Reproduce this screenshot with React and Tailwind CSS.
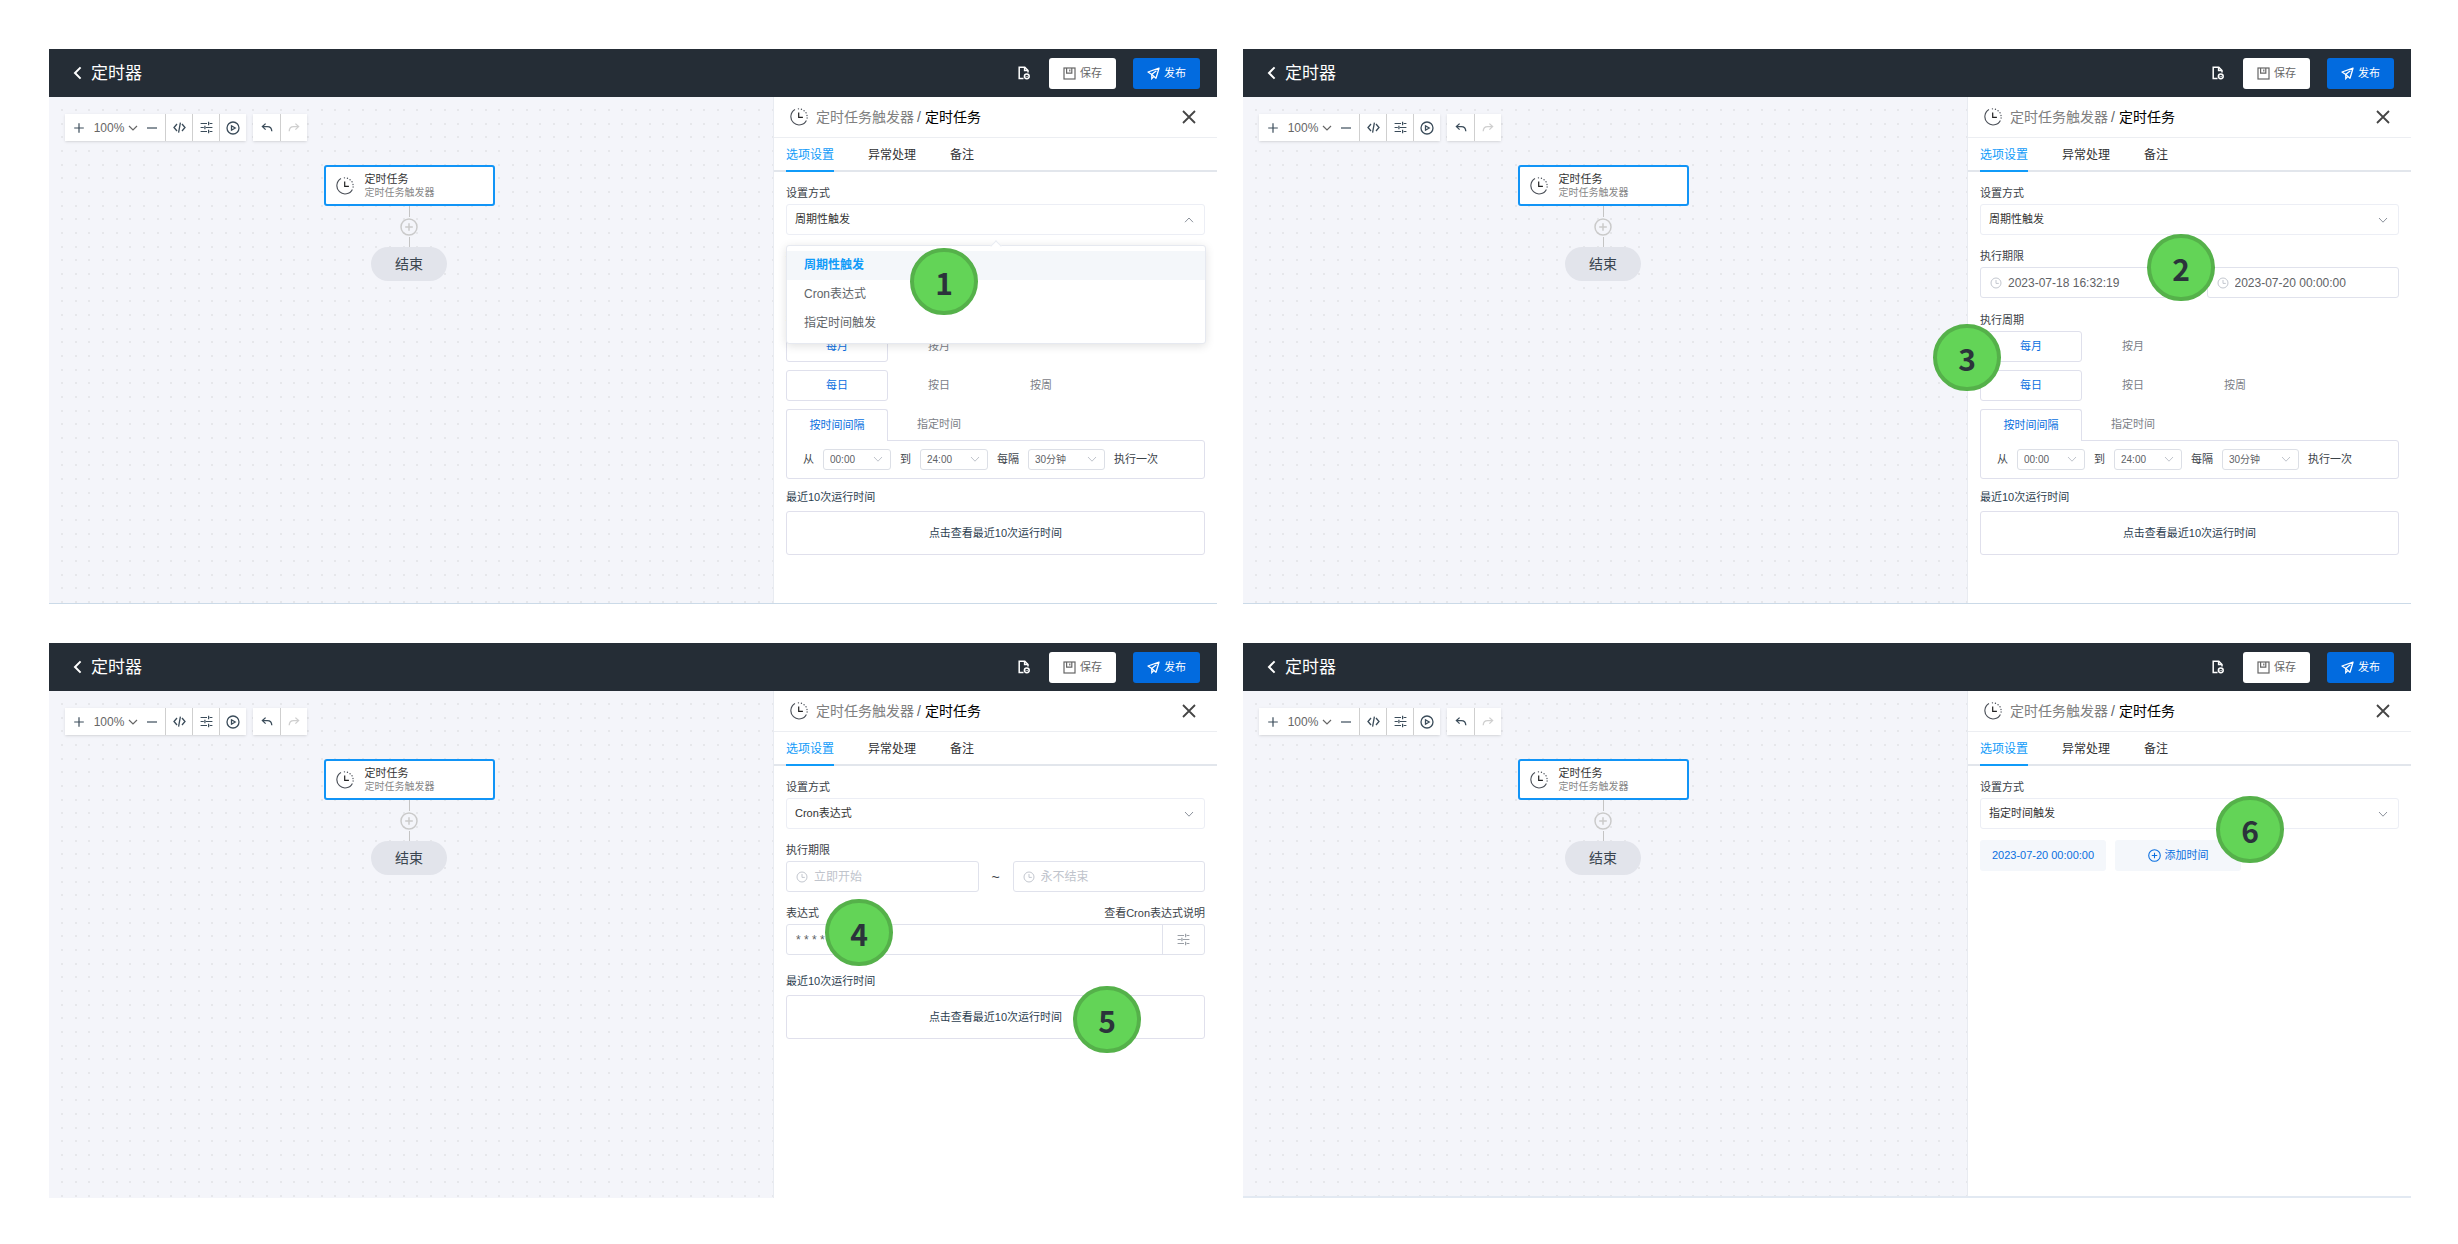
import React, { useId } from 'react';

const CYCLE = '周期性触发';
const CRON = 'Cron表达式';
const FIXED = '指定时间触发';
const MODES = [CYCLE, CRON, FIXED];

function Icon({ size = 'size-4', box = 16, stroke = 1.3, className = '', children }) {
  return (
    <svg
      viewBox={`0 0 ${box} ${box}`}
      className={`${size} shrink-0 ${className}`}
      fill="none"
      stroke="currentColor"
      strokeWidth={stroke}
      aria-hidden="true"
    >
      {children}
    </svg>
  );
}

const TimerIcon = () => (
  <Icon size="size-[18px]" box={18} stroke={1.1} className="text-[#4a4f57]">
    <path d="M5 1.6A8.2 8.2 0 1 0 16.4 12.4" />
    <path d="M8.4 .8h.1M11.4 1.2l.1 .1M14 2.6l.1 .1M16 4.8l.1 .1M17 7.4v.1M17.1 9.9v.1" strokeWidth="1.3" strokeLinecap="round" />
    <path d="M8.7 4.6v4.8h4.2" stroke="#222" strokeWidth="1.2" />
  </Icon>
);

const ClockIcon = () => (
  <Icon size="size-3" box={12} stroke={1} className="text-[#c3c7cf]">
    <circle cx="6" cy="6" r="5" />
    <path d="M6 3v3.4h2.8" />
  </Icon>
);

const SlidersIcon = () => (
  <Icon size="size-[13px]" box={13} stroke={1.2}>
    <path d="M.6 2.5h6.4M9.6 2.5h2.8M.6 6.5h3.2M5.6 6.5h6.8M.6 10.5h6.4M9.6 10.5h2.8" />
    <path d="M8.6 .8v3.4M4.9 4.8v3.4M8.6 8.8v3.4" />
  </Icon>
);

const Chevron = ({ up, className }) => (
  <Icon size="size-[10px]" box={10} stroke={1} className={className}>
    <path d={up ? 'M1 7.2 5 3l4 4.2' : 'M1 3l4 4.2L9 3'} />
  </Icon>
);

const PlusCircle = ({ size = 'size-[18px]', className }) => (
  <Icon size={size} box={18} stroke={1.5} className={className}>
    <circle cx="9" cy="9" r="8" />
    <path d="M9 5.2v7.6M5.2 9h7.6" />
  </Icon>
);

function TopBar() {
  return (
    <header className="flex h-12 items-center bg-[#252d36] pl-6 pr-[17px] text-white">
      <button aria-label="返回" className="flex">
        <Icon size="size-[14px]" box={14} stroke={2}>
          <path d="M7.6 1.4 2 7l5.6 5.6" />
        </Icon>
      </button>
      <h2 className="ml-1 pt-0.5 text-[17px] leading-6">定时器</h2>
      <div className="ml-auto flex items-center">
        <button aria-label="文档" className="mr-[18px] flex">
          <Icon size="size-[14px]" box={14} stroke={1.5}>
            <path d="M6.5 12.6H2.2V1.2h5.6l3.2 3.3v2" />
            <path d="M7.6 1.4v3.2h3.2" />
            <circle cx="9.8" cy="10.3" r="2.4" />
            <path d="m8.8 10.3.8.8 1.5-1.5" strokeWidth="1" />
          </Icon>
        </button>
        <button className="flex h-[31px] w-[67px] items-center justify-center gap-1 rounded-[3px] bg-white text-[11px] text-[#666]">
          <Icon size="size-[13px]" box={13} stroke={1.2}>
            <rect x="1" y="1" width="11" height="11" />
            <path d="M3.6 1v5.2h5.2V1M6.8 2.6v1.8" />
          </Icon>
          保存
        </button>
        <button className="ml-[17px] flex h-[31px] w-[67px] items-center justify-center gap-1 rounded-[3px] bg-[#026bdf] text-[11px] text-white">
          <Icon size="size-[13px]" box={13} stroke={1.3}>
            <path d="M12 1.2 1 5l3.4 2.3L9 11.2z" strokeLinejoin="round" />
            <path d="M4.6 7.4 9.4 3.8M4.8 7.6v4l1.9-2" />
          </Icon>
          发布
        </button>
      </div>
    </header>
  );
}

function DotGrid() {
  const id = useId();
  const steps = [12, 26, 39];
  return (
    <svg className="absolute inset-0 size-full" aria-hidden="true">
      <defs>
        <pattern id={id} width="41" height="41" patternUnits="userSpaceOnUse">
          {steps.map((x) => steps.map((y) => <rect key={`${x}-${y}`} x={x} y={y} width="2" height="2" fill="#e6e7eb" />))}
        </pattern>
      </defs>
      <rect width="100%" height="100%" fill={`url(#${id})`} />
    </svg>
  );
}

function ToolButton({ label, disabled, divided, children }) {
  return (
    <button
      aria-label={label}
      disabled={disabled}
      className={`flex w-[27px] items-center justify-center disabled:text-[#cfcfcf] ${divided ? 'border-l border-[#cfcfcf]' : ''}`}
    >
      {children}
    </button>
  );
}

function Toolbar() {
  return (
    <div className="flex gap-[7px] text-[#3b4c5a]">
      <div className="flex h-[27px] bg-white shadow-sm">
        <div className="flex w-[100px] items-center justify-between px-2">
          <button aria-label="放大" className="flex">
            <Icon size="size-3" box={12} stroke={1.2}><path d="M6 1.2v9.6M1.2 6h9.6" /></Icon>
          </button>
          <button className="flex items-center gap-1 text-xs text-[#666]">
            100%
            <Icon size="size-[10px]" box={10} stroke={1.2}><path d="M1 3l4 4 4-4" /></Icon>
          </button>
          <button aria-label="缩小" className="flex">
            <Icon size="size-[10px]" box={10} stroke={1.2}><path d="M0 5h10" /></Icon>
          </button>
        </div>
        <ToolButton label="代码" divided>
          <Icon size="size-[13px]" box={13} stroke={1.3}><path d="M4 3 1 6.5 4 10M9 3l3 3.5L9 10M7.4 1.6 5.6 11.6" /></Icon>
        </ToolButton>
        <ToolButton label="参数" divided><SlidersIcon /></ToolButton>
        <ToolButton label="运行" divided>
          <Icon size="size-[14px]" box={14} stroke={1.3}>
            <circle cx="7" cy="7" r="6" />
            <path d="M5.5 4.8v4.4L9.2 7z" />
          </Icon>
        </ToolButton>
      </div>
      <div className="flex h-[27px] bg-white shadow-sm">
        <ToolButton label="撤销">
          <Icon size="size-3" box={12} stroke={1.3}><path d="M4.6 1.6 1.4 4.6l3.2 3M1.4 4.6h5q4.2 0 4.4 4.6" /></Icon>
        </ToolButton>
        <ToolButton label="重做" divided disabled>
          <Icon size="size-3" box={12} stroke={1.3}><path d="M7.4 1.6l3.2 3-3.2 3M10.6 4.6h-5Q1.4 4.6 1.2 9.2" /></Icon>
        </ToolButton>
      </div>
    </div>
  );
}

function Canvas() {
  return (
    <section className="relative min-w-0 flex-1 bg-[#f4f5fa]">
      <DotGrid />
      <div className="relative py-[17px] pl-4 pr-5">
        <Toolbar />
        <div className="mt-6 flex flex-col items-center">
          <div className="flex h-[41px] w-[171px] items-center gap-[11px] rounded-[3px] border-2 border-[#1194f6] bg-white pl-[10px]">
            <TimerIcon />
            <div className="text-[#333]">
              <p className="text-[11px] leading-[14px]">定时任务</p>
              <p className="text-[10px] leading-[14px] text-[#888]">定时任务触发器</p>
            </div>
          </div>
          <div className="h-[11px] w-px bg-[#c4c4c4]" />
          <button aria-label="添加节点" className="my-px flex"><PlusCircle className="text-[#cacaca]" /></button>
          <div className="h-[10px] w-px bg-[#c4c4c4]" />
          <div className="rounded-full bg-[#e2e4eb] px-6 py-[7px] text-sm leading-5 text-[#3b4650]">结束</div>
        </div>
      </div>
    </section>
  );
}

function Badge({ n, place }) {
  return (
    <div
      className={`absolute z-20 flex h-[67px] w-[68px] items-center justify-center rounded-full border-4 border-[#55b14a] bg-[#63d457] font-['Noto_Sans_CJK_SC',sans-serif] text-[30px] font-bold leading-none text-[#2b333b] ${place}`}
    >
      {n}
    </div>
  );
}

function ModeSelect({ value, open }) {
  const id = useId();
  return (
    <div>
      <label htmlFor={id} className="mb-px block leading-5">设置方式</label>
      <div className="relative">
        <select
          id={id}
          defaultValue={value}
          className="h-[31px] w-full appearance-none rounded-[3px] border border-[#eceef5] bg-white pl-2 text-[11px] text-[#333]"
        >
          {MODES.map((m) => <option key={m}>{m}</option>)}
        </select>
        <Chevron up={open} className="pointer-events-none absolute right-[11px] top-[11px] text-[#8c929c]" />
        {open && (
          <div className="absolute -right-px left-0 top-[41px] z-10 rounded-[3px] border border-[#e6e9f0] bg-white py-[5px] shadow-[0_2px_10px_rgba(0,0,0,0.12)]">
            <span className="absolute -top-1 left-1/2 size-2 -translate-x-1/2 rotate-45 border-l border-t border-[#e9ecf2] bg-white" />
            <ul role="listbox" aria-label="设置方式" className="relative bg-white text-xs leading-[29px] text-[#606468]">
              {MODES.map((m) => (
                <li
                  key={m}
                  role="option"
                  aria-selected={m === value}
                  className={m === value ? 'bg-[#f4f7fa] px-[17px] font-bold text-[#109bf9]' : 'px-[17px]'}
                >
                  {m}
                </li>
              ))}
            </ul>
          </div>
        )}
      </div>
    </div>
  );
}

function DateInput({ label, value, placeholder }) {
  return (
    <label className="flex h-[31px] min-w-0 flex-1 items-center gap-1.5 rounded-[3px] border border-[#e0e2ec] bg-white px-[9px]">
      <ClockIcon />
      <input
        aria-label={label}
        defaultValue={value}
        placeholder={placeholder}
        className="w-full min-w-0 text-xs text-[#606266] outline-none placeholder:text-[#c0c4cc]"
      />
    </label>
  );
}

function DateRange({ start, end }) {
  return (
    <div className="mt-[11px]">
      <p className="mb-px leading-5">执行期限</p>
      <div className="flex items-center">
        <DateInput label="开始时间" value={start} placeholder="立即开始" />
        <span className="w-[34px] text-center text-sm leading-5">~</span>
        <DateInput label="结束时间" value={end} placeholder="永不结束" />
      </div>
    </div>
  );
}

function Segments({ items }) {
  return (
    <div className="flex">
      {items.map((t, i) => (
        <button
          key={t}
          className={`h-[31px] w-[102px] rounded-[3px] text-[11px] ${i === 0 ? 'border border-[#dfe0ec] text-[#0a6fe0]' : 'text-[#7b8087]'}`}
        >
          {t}
        </button>
      ))}
    </div>
  );
}

function SmallSelect({ label, value, width }) {
  return (
    <span className={`relative flex ${width}`}>
      <select
        aria-label={label}
        defaultValue={value}
        className="h-[21px] w-full appearance-none rounded-[3px] border border-[#dcdfe6] bg-white pl-1.5 text-[10px] text-[#606266]"
      >
        <option>{value}</option>
      </select>
      <Chevron className="pointer-events-none absolute right-2 top-[5px] text-[#c0c4cc]" />
    </span>
  );
}

function Recent({ space }) {
  return (
    <div className={space}>
      <p className="mb-1 leading-5 text-[#2c3e50]">最近10次运行时间</p>
      <button className="h-11 w-full rounded-[3px] border border-[#e0e0ec] text-[11px] text-[#2c3e50]">
        点击查看最近10次运行时间
      </button>
    </div>
  );
}

function CycleForm() {
  return (
    <>
      <DateRange start="2023-07-18 16:32:19" end="2023-07-20 00:00:00" />
      <p className="mb-px mt-3 leading-5">执行周期</p>
      <div className="flex flex-col gap-2">
        <Segments items={['每月', '按月']} />
        <Segments items={['每日', '按日', '按周']} />
        <div>
          <div className="flex text-[11px]">
            <button className="relative -mb-px h-8 w-[102px] rounded-t-[3px] border border-b-0 border-[#dfe0ec] bg-white text-[#0a6fe0]">
              按时间间隔
            </button>
            <button className="h-[31px] w-[102px] text-[#7b8087]">指定时间</button>
          </div>
          <div className="flex h-[39px] items-center gap-[9px] rounded-b-[3px] rounded-tr-[3px] border border-[#dfe0ec] pl-4">
            <span>从</span>
            <SmallSelect label="开始" value="00:00" width="w-[68px]" />
            <span>到</span>
            <SmallSelect label="结束" value="24:00" width="w-[68px]" />
            <span>每隔</span>
            <SmallSelect label="间隔" value="30分钟" width="w-[77px]" />
            <span>执行一次</span>
          </div>
        </div>
      </div>
      <Recent space="mt-2" />
    </>
  );
}

function CronForm() {
  const id = useId();
  return (
    <>
      <DateRange />
      <div className="mb-px mt-[11px] flex justify-between leading-5">
        <label htmlFor={id}>表达式</label>
        <a href="#cron">查看Cron表达式说明</a>
      </div>
      <div className="flex h-[31px] rounded-[3px] border border-[#e0e2ec]">
        <input id={id} defaultValue="* * * * * ?" className="min-w-0 flex-1 px-[9px] text-xs text-[#606266] outline-none" />
        <button aria-label="表达式设置" className="flex w-[42px] items-center justify-center border-l border-[#e0e2ec] text-[#9a9fa6]">
          <SlidersIcon />
        </button>
      </div>
      <Recent space="mt-4" />
    </>
  );
}

function FixedForm() {
  return (
    <div className="mt-[11px] flex gap-[9px] text-[11px] text-[#0a6fe0]">
      <button className="h-[31px] w-[126px] rounded-[3px] bg-[#f4f7fb]">2023-07-20 00:00:00</button>
      <button className="flex h-[31px] w-[126px] items-center justify-center gap-1 rounded-[3px] bg-[#f4f7fb]">
        <PlusCircle size="size-[13px]" />
        添加时间
      </button>
    </div>
  );
}

function SidePanel({ mode, open, badges }) {
  return (
    <aside className="relative w-[444px] shrink-0 border-l border-[#e8ebf1] bg-white">
      <div className="flex h-[41px] items-center border-b border-[#eceef2] pl-4 pr-[21px] text-sm">
        <TimerIcon />
        <span className="ml-2 text-[#808080]">定时任务触发器</span>
        <span className="ml-[3px] text-[#606266]">/</span>
        <h3 className="ml-1 text-black">定时任务</h3>
        <button aria-label="关闭" className="ml-auto flex text-[#454545]">
          <Icon size="size-[14px]" box={14} stroke={1.8}><path d="m1 1 12 12M13 1 1 13" /></Icon>
        </button>
      </div>
      <nav className="flex h-[34px] gap-[34px] border-b-2 border-[#e2e6ec] px-3 text-xs text-[#303133]">
        <button className="-mb-0.5 border-b-2 border-[#109bf9] pt-0.5 text-[#109bf9]">选项设置</button>
        <button className="pt-0.5">异常处理</button>
        <button className="pt-0.5">备注</button>
      </nav>
      <div className="px-3 pb-11 pt-[11px] text-[11px] text-[#3b4248]">
        <ModeSelect value={mode} open={open} />
        {mode === CYCLE && <CycleForm />}
        {mode === CRON && <CronForm />}
        {mode === FIXED && <FixedForm />}
      </div>
      {badges.map((b) => <Badge key={b.n} {...b} />)}
    </aside>
  );
}

const SCREENS = [
  { mode: CYCLE, open: true, line: 'border-b border-[#cbdae8]', badges: [{ n: 1, place: 'left-[136px] top-[151px]' }] },
  {
    mode: CYCLE,
    line: 'border-b border-[#cbdae8]',
    badges: [
      { n: 2, place: 'left-[179px] top-[137px]' },
      { n: 3, place: '-left-[35px] top-[227px]' },
    ],
  },
  {
    mode: CRON,
    line: '',
    badges: [
      { n: 4, place: 'left-[51px] top-[208px]' },
      { n: 5, place: 'left-[299px] top-[295px]' },
    ],
  },
  { mode: FIXED, line: 'border-b-2 border-[#e2e9f2]', badges: [{ n: 6, place: 'left-[248px] top-[105px]' }] },
];

export default function App() {
  return (
    <main className="grid min-h-screen grid-cols-2 grid-rows-2 gap-x-[26px] gap-y-[39px] bg-white pb-[46px] pl-[49px] pr-[47px] pt-[49px] font-['Liberation_Sans','Noto_Sans_CJK_SC',sans-serif]">
      {SCREENS.map((s, i) => (
        <article key={i} className={`flex flex-col ${s.line}`}>
          <TopBar />
          <div className="flex flex-1">
            <Canvas />
            <SidePanel mode={s.mode} open={s.open} badges={s.badges} />
          </div>
        </article>
      ))}
    </main>
  );
}
